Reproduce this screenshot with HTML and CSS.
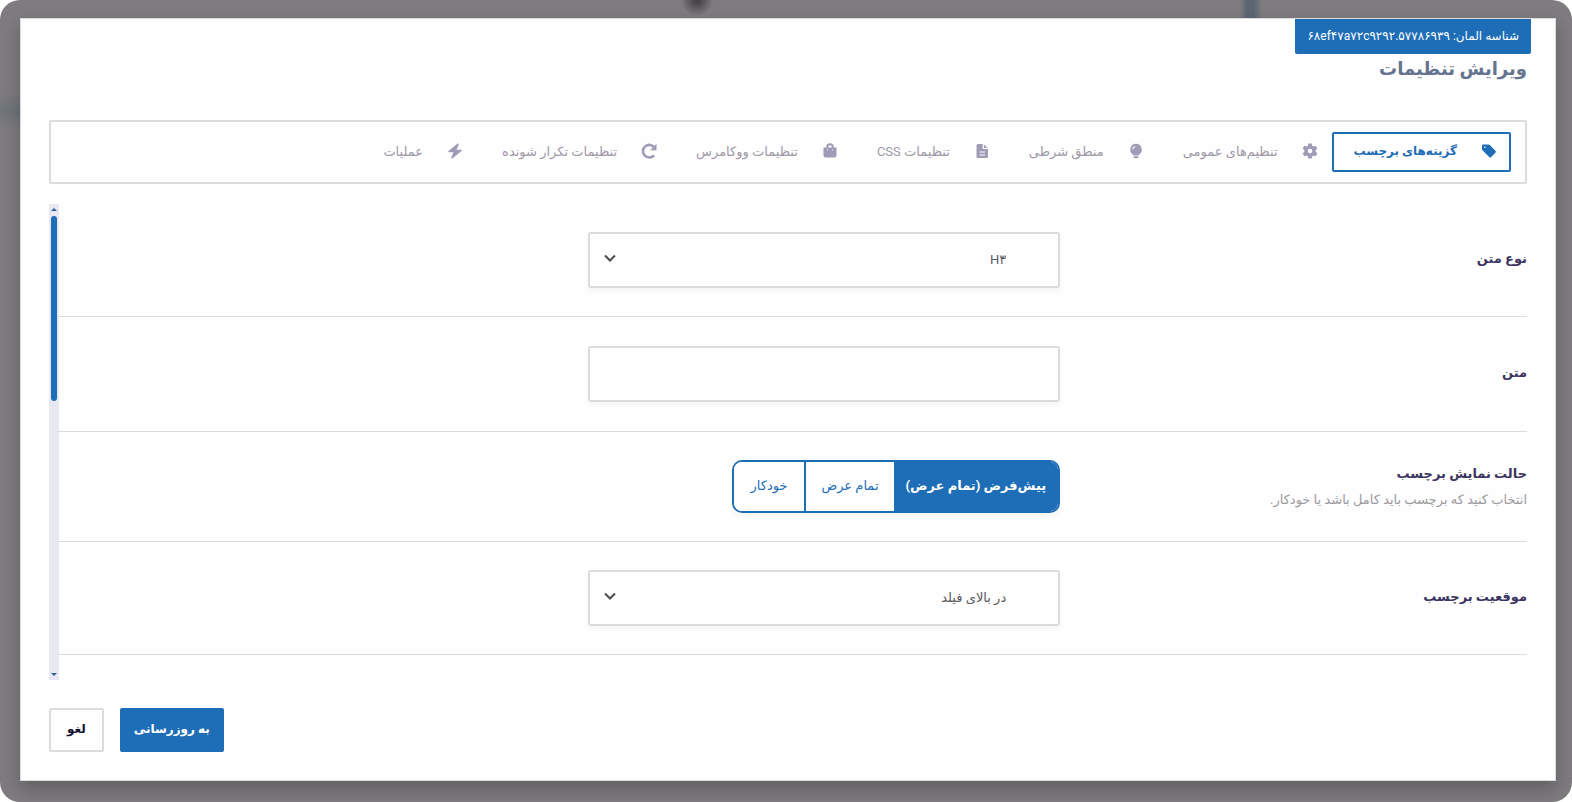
FILE: index.html
```html
<!DOCTYPE html>
<html lang="fa" dir="rtl">
  <head>
    <meta charset="UTF-8" />
    <meta name="viewport" content="width=device-width, initial-scale=1.0" />
    <title>ویرایش تنظیمات</title>
    <link rel="stylesheet" href="styles.css" />
  </head>
  <body>
    <div class="overlay">
      <main class="modal">
        <div class="element-id">شناسه المان: <bdi dir="ltr">۶۸ef۴۷a۷۲c۹۲۹۲.۵۷۷۸۶۹۳۹</bdi></div>
        <h1>ویرایش تنظیمات</h1>

        <nav class="tabs">
          <button class="tab active" type="button">
            <svg viewBox="0 0 16 16"><path fill-rule="evenodd" d="M1 2.5Q1 1.5 2 1.5H7.3Q8.200 1.500 8.800 2.100L14.400 7.700Q15.400 8.700 14.400 9.700L10.200 14Q9.200 15 8.200 14L1.700 7.600Q1 7 1 6ZM3.100 4.300a.8.8 0 1 0 1.600 0a.8.8 0 1 0-1.600 0Z" /></svg>
            گزینه‌های برچسب
          </button>
          <button class="tab" type="button">
            <svg viewBox="0 0 16 16"><path fill-rule="evenodd" d="M6.300 .5h3.400l.5 2.200 1.200.7 2.200-.7 1.700 2.900-1.600 1.600v1.600l1.600 1.600-1.700 2.900-2.200-.7-1.200.7-.5 2.200H6.300l-.5-2.200-1.200-.7-2.200.7-1.700-2.900 1.600-1.600V7.200L.7 5.600l1.700-2.900 2.200.7 1.200-.7ZM5.700 8a2.300 2.300 0 1 0 4.600 0a2.300 2.300 0 1 0-4.600 0Z" /></svg>
            تنظیم‌های عمومی
          </button>
          <button class="tab" type="button">
            <svg viewBox="0 0 16 16"><path d="M8 .800a5.800 5.800 0 0 1 3.200 10.600q-.7.500-.7 1.100h-5q0-.6-.7-1.100A5.800 5.800 0 0 1 8 .800Z" /><path d="M5.300 13.300h5.400q0 2-2 2H7.300q-2 0-2-2Z" /><path class="cut" d="M4.800 6.200Q5 4 7.200 3.500" /></svg>
            منطق شرطی
          </button>
          <button class="tab" type="button">
            <svg viewBox="0 0 16 16"><path d="M4 1h5.500L14 5.500V13.500Q14 15 12.500 15H4Q2.500 15 2.500 13.500V2.500Q2.500 1 4 1Z" /><path class="cut" d="M9.300 1v4.500H14M5.500 9h5.500M5.500 12h5.500" /></svg>
            تنظیمات CSS
          </button>
          <button class="tab" type="button">
            <svg viewBox="0 0 16 16"><path d="M1.500 4.500h13v8q0 2-2 2h-9q-2 0-2-2Z" /><path class="line" d="M5.200 6V4Q5.200 1.300 8 1.300T10.800 4V6" /><path class="cut" d="M5 6.800h.8M10.200 6.800h.8" /></svg>
            تنظیمات ووکامرس
          </button>
          <button class="tab" type="button">
            <svg viewBox="0 0 16 16"><path class="line arc" d="M13.600 4.800A6.300 6.300 0 1 0 13 12.300" /><path d="M15.500 .8v6.400H9.100Z" /></svg>
            تنظیمات تکرار شونده
          </button>
          <button class="tab" type="button">
            <svg viewBox="0 0 16 16"><path d="M10.600 .5 1.500 8q-.8 1 .5 1.200h4.500L4.200 14.500q0 1.500 1.200.9L14.500 8q.8-1-.5-1.200H9.500l2.300-5.300q0-1.500-1.200-1Z" /></svg>
            عملیات
          </button>
        </nav>

        <div class="content">
          <form class="fields" id="settings">
            <div class="row">
              <label for="text-type">نوع متن</label>
              <div class="select-box">
                <select id="text-type">
                  <option>H۳</option>
                </select>
                <svg viewBox="0 0 12 8"><path d="M1 1.500 6 6.500 11 1.500" /></svg>
              </div>
            </div>
            <div class="row text-row">
              <label for="text">متن</label>
              <input id="text" type="text" />
            </div>
            <div class="row">
              <div class="caption" id="display-label">
                <strong>حالت نمایش برچسب</strong>
                <small>انتخاب کنید که برچسب باید کامل باشد یا خودکار.</small>
              </div>
              <div class="choices" role="group" aria-labelledby="display-label">
                <button class="choice active" type="button">پیش‌فرض (تمام عرض)</button>
                <button class="choice" type="button">تمام عرض</button>
                <button class="choice" type="button">خودکار</button>
              </div>
            </div>
            <div class="row">
              <label for="position">موقعیت برچسب</label>
              <div class="select-box">
                <select id="position">
                  <option>در بالای فیلد</option>
                </select>
                <svg viewBox="0 0 12 8"><path d="M1 1.500 6 6.500 11 1.500" /></svg>
              </div>
            </div>
          </form>
          <div class="scrollbar">
            <svg viewBox="0 0 6 3"><path d="M0 3 3 0 6 3Z" /></svg>
            <div class="track"><div class="thumb"></div></div>
            <svg viewBox="0 0 6 3"><path d="M0 0H6L3 3Z" /></svg>
          </div>
        </div>

        <footer>
          <button class="btn primary" type="submit" form="settings">به روزرسانی</button>
          <button class="btn" type="button">لغو</button>
        </footer>
      </main>
    </div>
  </body>
</html>
```
FILE: styles.css
```css
* {
  box-sizing: border-box;
}
body {
  margin: 0;
  background-color: #fff;
  font-family: Roboto, "DejaVu Sans", sans-serif;
  font-size: 13px;
}
button,
input,
select {
  font-family: inherit;
  font-size: inherit;
  margin: 0;
}
.overlay {
  display: flex;
  height: 100vh;
  padding: 18px 16px 21px 20px;
  border-radius: 20px;
  background:
    radial-gradient(circle at 697px 0, #454245 2px, transparent 16px),
    linear-gradient(90deg, transparent 1240px, #5b6673 1247px, #5b6673 1254px, transparent 1262px) top / 100% 18px no-repeat,
    linear-gradient(transparent 92px, #6f757b 112px, transparent 130px) left / 20px 100% no-repeat,
    #7f7c7f;
}
.modal {
  display: flex;
  flex-direction: column;
  flex: 1;
  min-width: 0;
  padding: 0 28px 28px;
  background-color: #fefefe;
  border: 1px solid #dcdbde;
  box-shadow: 0 8px 18px rgba(0, 0, 0, 0.25);
}
.element-id {
  align-self: flex-start;
  margin-right: -4px;
  padding: 0 12px;
  line-height: 35px;
  font-size: 12px;
  color: #fff;
  background-color: #1e6db7;
  border-radius: 0 0 2px 2px;
}
h1 {
  margin: 0 0 37px;
  font-size: 18px;
  line-height: 29px;
  font-weight: bold;
  color: #64748f;
}
.tabs {
  display: flex;
  padding: 10px 14px;
  border: 2px solid #dcdbde;
  border-radius: 2px;
}
.tab {
  display: flex;
  align-items: center;
  gap: 24px;
  height: 40px;
  padding: 0 12px 2px 23px;
  border: 2px solid transparent;
  border-radius: 2px;
  background: none;
  color: #9d99a8;
  white-space: nowrap;
  cursor: pointer;
}
.tab svg {
  width: 16px;
  height: 16px;
  fill: #a19bb8;
}
.tab .cut,
.tab .line {
  fill: none;
  stroke: #fefefe;
  stroke-width: 1.2;
}
.tab .line {
  stroke: #a19bb8;
  stroke-width: 2;
}
.tab .arc {
  stroke-width: 2.6;
}
.tab.active {
  padding-left: 20px;
  border-color: #1e6db7;
  color: #1e6db7;
  font-size: 12px;
  font-weight: bold;
}
.tab.active svg {
  fill: #1e6db7;
}
.content {
  display: flex;
  flex: 1;
  min-height: 0;
  margin: 20px 0 28px;
}
.fields {
  flex: 1;
  overflow: hidden;
}
.row {
  display: flex;
  align-items: center;
  padding: 28px 0;
  border-bottom: 1px solid #dcdbde;
}
.text-row {
  padding: 29px 0;
}
.row label,
.caption {
  width: 31.8%;
  font-size: 13px;
  line-height: 27px;
  font-weight: bold;
  color: #3b3561;
}
.row label {
  padding-bottom: 3px;
}
.caption strong,
.caption small {
  display: block;
}
.caption small {
  line-height: 26px;
  font-size: 13px;
  font-weight: normal;
  color: #9c9a9f;
}
.select-box,
.row input {
  width: 32.2%;
  height: 56px;
}
.select-box {
  position: relative;
}
.row input,
.row select {
  border: 2px solid #dcdbde;
  border-radius: 3px;
  background-color: #fefefe;
  color: #5c5a5e;
  box-shadow: 0 3px 4px rgba(90, 70, 120, 0.05);
}
.row select {
  appearance: none;
  width: 100%;
  height: 100%;
  padding: 0 52px 2px;
}
.select-box svg {
  position: absolute;
  left: 16px;
  top: 22px;
  width: 12px;
  height: 8px;
  fill: none;
  stroke: #4c4c50;
  stroke-width: 2;
}
.choices {
  display: flex;
  height: 53px;
  border: 2px solid #1e6db7;
  border-radius: 10px;
  overflow: hidden;
  box-shadow: 0 3px 4px rgba(90, 70, 120, 0.05);
}
.choice {
  padding: 0 15px 3px;
  border: 0;
  border-left: 2px solid #1e6db7;
  background-color: #fefefe;
  color: #1e6db7;
  cursor: pointer;
}
.choice:last-child {
  padding: 0 17px 3px;
  border-left: 0;
}
.choice.active {
  padding: 0 12px 3px;
  border-left: 0;
  background-color: #1e6db7;
  color: #fff;
  font-weight: bold;
}
.scrollbar {
  display: flex;
  flex-direction: column;
  align-items: center;
  width: 10px;
  padding: 4px 0;
  background-color: #e8e8f2;
}
.scrollbar svg {
  width: 6px;
  height: 3px;
  fill: #2c5f97;
}
.track {
  flex: 1;
  width: 6px;
  margin: 5px 0;
}
.thumb {
  height: 41%;
  border-radius: 3px;
  background-color: #1e6db7;
}
footer {
  display: flex;
  flex-direction: row;
  justify-content: flex-end;
  gap: 16px;
}
.btn {
  height: 44px;
  padding: 0 16px 3px;
  border: 2px solid #dcdbde;
  border-radius: 2px;
  background-color: #fefefe;
  color: #14102e;
  font-size: 12px;
  font-weight: bold;
  cursor: pointer;
}
.btn.primary {
  padding: 0 12px 3px;
  border-color: #1e6db7;
  background-color: #1e6db7;
  color: #fff;
}
```
